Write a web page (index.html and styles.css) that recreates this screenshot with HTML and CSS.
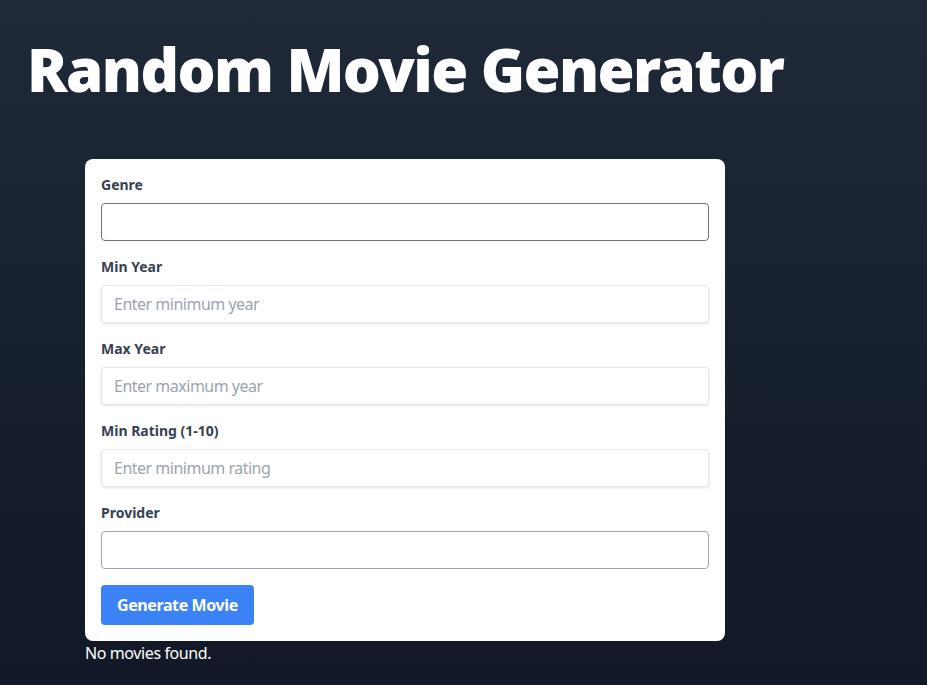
FILE: index.html
```html
<!DOCTYPE html>
<html lang="en">
<head>
<meta charset="utf-8">
<title>Random Movie Generator</title>
<link rel="stylesheet" href="styles.css">
</head>
<body>
<div class="page">
  <h1 class="title">Random Movie Generator</h1>
  <main class="content">
    <form class="card">
      <div class="field">
        <label class="label" for="genre">Genre</label>
        <select id="genre" class="select select-dark"></select>
      </div>
      <div class="field">
        <label class="label" for="minYear">Min Year</label>
        <input id="minYear" class="input" type="text" placeholder="Enter minimum year">
      </div>
      <div class="field">
        <label class="label" for="maxYear">Max Year</label>
        <input id="maxYear" class="input" type="text" placeholder="Enter maximum year">
      </div>
      <div class="field">
        <label class="label" for="minRating">Min Rating (1-10)</label>
        <input id="minRating" class="input" type="text" placeholder="Enter minimum rating">
      </div>
      <div class="field">
        <label class="label" for="provider">Provider</label>
        <select id="provider" class="select select-light"></select>
      </div>
      <button type="button" class="button">Generate Movie</button>
    </form>
    <p class="empty">No movies found.</p>
  </main>
</div>
</body>
</html>
```

FILE: styles.css
```css
html, body {
  margin: 0;
  padding: 0;
  height: 100%;
}
body {
  background: linear-gradient(to bottom, #1f2937, #111827);
  font-family: "Noto Sans", "Open Sans", sans-serif;
  color: #ffffff;
}
.page {
  padding: 14px 0 0 27px;
}
.title {
  margin: 0;
  font-family: "Noto Sans", sans-serif;
  font-weight: 900;
  font-size: 60px;
  line-height: 110px;
  letter-spacing: -1.6px;
  color: #ffffff;
}
.content {
  padding: 35px 0 0 58px;
}
.card {
  width: 608px;
  padding: 16px;
  background: #ffffff;
  border-radius: 8px;
  display: flex;
  flex-direction: column;
  align-items: flex-start;
}
.field {
  width: 100%;
  margin-bottom: 16px;
}
.label {
  display: block;
  font-size: 14px;
  line-height: 20px;
  font-weight: 700;
  color: #374151;
  margin-bottom: 8px;
}
.input, .select {
  display: block;
  box-sizing: border-box;
  width: 100%;
  height: 38px;
  margin: 0;
  padding: 0 12px;
  border-radius: 4px;
  font-family: inherit;
  font-size: 16px;
  letter-spacing: -0.5px;
  color: #374151;
  background: #ffffff;
  -webkit-appearance: none;
  appearance: none;
}
.input {
  border: 1px solid #e5e7eb;
  box-shadow: 0 1px 3px rgba(0,0,0,0.1);
}
.input::placeholder {
  color: #9ca3af;
}
.select-dark {
  border: 1px solid #6b7280;
}
.select-light {
  border: 1px solid #a0a6b8;
}
.button {
  background: #3b82f6;
  color: #ffffff;
  border: none;
  border-radius: 4px;
  height: 40px;
  padding: 0 16px;
  font-family: inherit;
  font-size: 16px;
  letter-spacing: -0.4px;
  font-weight: 700;
}
.empty {
  margin: 0;
  font-size: 16px;
  line-height: 24px;
  letter-spacing: -0.4px;
  color: #ffffff;
}
```
